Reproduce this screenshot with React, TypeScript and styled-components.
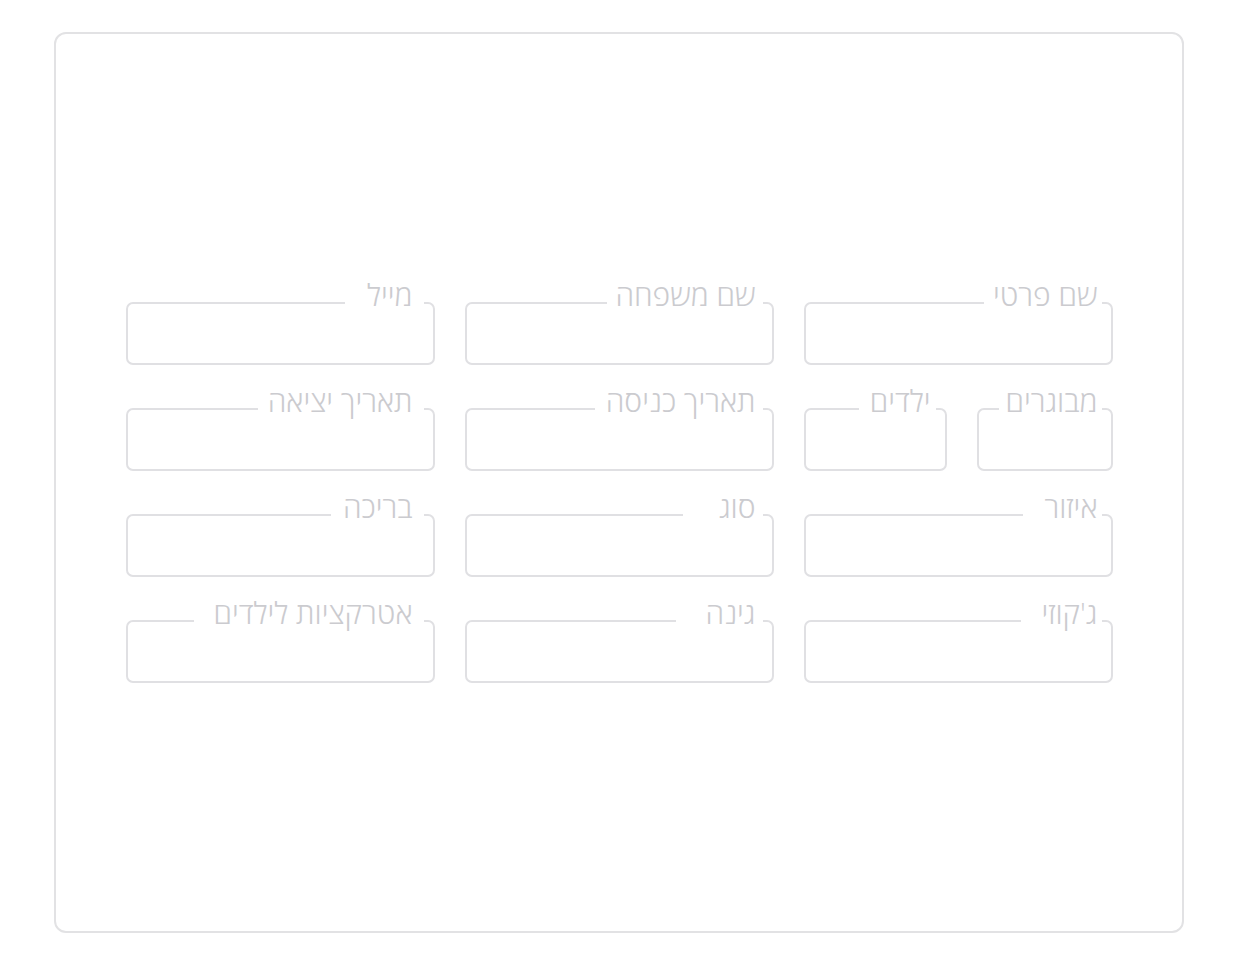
import React from "react";
import styled, {createGlobalStyle} from "styled-components";

const GlobalStyle = createGlobalStyle`
  body {
    margin: 0;
    background: #ffffff;
    font-family: "Open Sans", "Liberation Sans", sans-serif;
  }
`;

const Page = styled("div")`
  padding: 32px 53px 21px 54px;
`;

const Card = styled("div")`
  height: 901px;
  border: 2px solid #e2e2e4;
  border-radius: 12px;
  box-sizing: border-box;
  display: flex;
  align-items: center;
  justify-content: center;
`;

const Form = styled("form")`
  direction: rtl;
  display: grid;
  grid-template-columns: repeat(3, 309px);
  grid-auto-rows: 63px;
  column-gap: 30px;
  row-gap: 43px;
  padding-top: 20px;
`;

const Pair = styled("div")`
  display: grid;
  grid-template-columns: 136px 143px;
  column-gap: 30px;
`;

const Box = styled("div")`
  position: relative;
  height: 63px;
  border: 2px solid #e0e0e3;
  border-radius: 7px;
  box-sizing: border-box;
`;

const Label = styled("span")<{ $notch: number; $inset: number }>`
  position: absolute;
  top: -24px;
  right: 9px;
  width: ${p => p.$notch}px;
  padding-right: ${p => p.$inset}px;
  box-sizing: border-box;
  background: #ffffff;
  font-size: 30px;
  font-weight: 300;
  line-height: 30px;
  color: #cbcbcf;
  text-align: right;
  white-space: nowrap;
`;

type Field = { label: string; notch: number; inset: number };

function TextField({label, notch, inset}: Field) {
    return (
        <Box>
            <Label $notch={notch} $inset={inset}>{label}</Label>
        </Box>
    );
}

const rows: (Field | Field[])[][] = [
    [
        {label: "שם פרטי", notch: 118, inset: 4},
        {label: "שם משפחה", notch: 156, inset: 7},
        {label: "מייל", notch: 79, inset: 11},
    ],
    [
        [
            {label: "מבוגרים", notch: 103, inset: 4},
            {label: "ילדים", notch: 77, inset: 5},
        ],
        {label: "תאריך כניסה", notch: 168, inset: 7},
        {label: "תאריך יציאה", notch: 166, inset: 11},
    ],
    [
        {label: "איזור", notch: 79, inset: 4},
        {label: "סוג", notch: 80, inset: 7},
        {label: "בריכה", notch: 93, inset: 11},
    ],
    [
        {label: "ג'קוזי", notch: 81, inset: 4},
        {label: "גינה", notch: 87, inset: 7},
        {label: "אטרקציות לילדים", notch: 230, inset: 11},
    ],
];

export default function App() {
    return (
        <Page>
            <GlobalStyle/>
            <Card>
                <Form>
                    {rows.flat().map((cell, i) =>
                        Array.isArray(cell) ? (
                            <Pair key={i}>
                                {cell.map(f => <TextField key={f.label} {...f}/>)}
                            </Pair>
                        ) : (
                            <TextField key={i} {...cell}/>
                        )
                    )}
                </Form>
            </Card>
        </Page>
    );
}
